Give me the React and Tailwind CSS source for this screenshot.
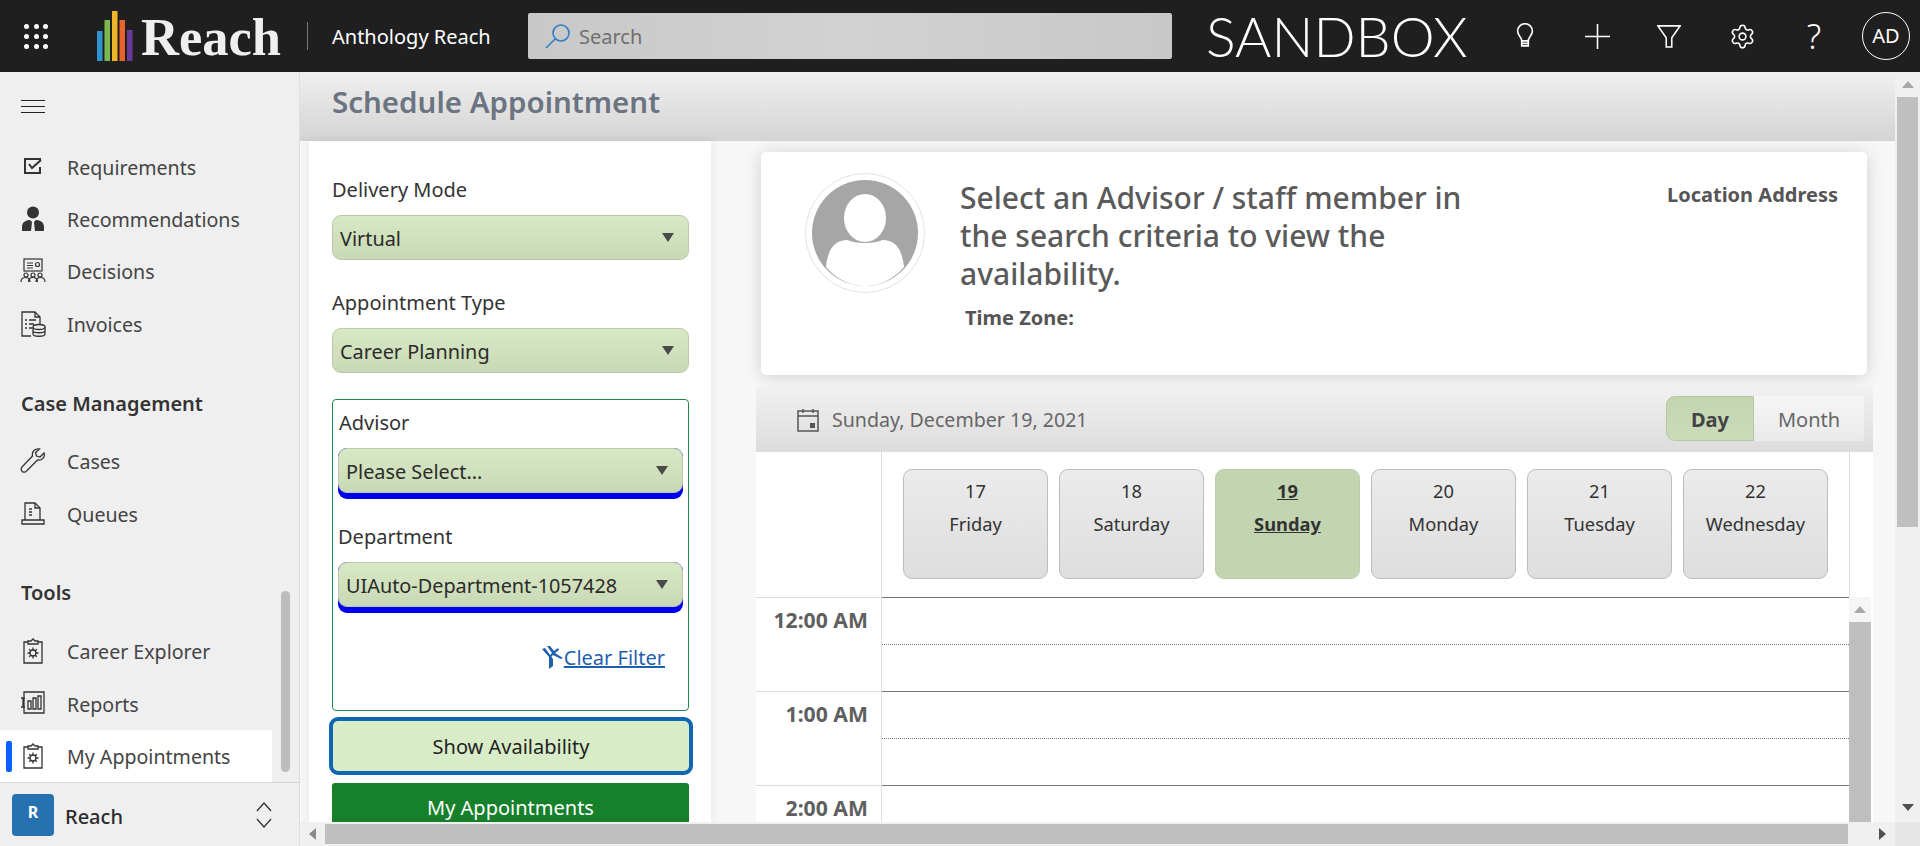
import React from "react";
import { Settings } from "lucide-react";

const FONT = "font-['Noto_Sans',sans-serif]";

// --- little drawings for the sidebar ---
const IconRequirements = () => (
  <svg width="24" height="24" viewBox="0 0 24 24" fill="none" stroke="#333" strokeWidth="2">
    <path d="M20 5H4v14h15v-6" />
    <path d="M8 10l3 4 9-8" />
  </svg>
);
const IconRecommendations = () => (
  <svg width="24" height="26" viewBox="0 0 24 26" fill="#333">
    <circle cx="12" cy="6.5" r="6" />
    <path d="M1 25v-4c0-5 4-7 8-7l2 2-1 9zM23 25v-4c0-5-4-7-8-7l-2 2 1 9z" />
  </svg>
);
const IconDecisions = () => (
  <svg width="26" height="26" viewBox="0 0 26 26" fill="none" stroke="#333" strokeWidth="1.2">
    <rect x="4" y="1" width="18" height="12" />
    <path d="M7 5h6M7 7.500h6M7 10h6" />
    <circle cx="17.500" cy="6.500" r="2" />
    <circle cx="6" cy="17" r="2" />
    <circle cx="13" cy="17" r="2" />
    <circle cx="20" cy="17" r="2" />
    <path d="M1 24c0-6 9-6 9 0M8.500 24c0-6 9-6 9 0M16 24c0-6 9-6 9 0" />
  </svg>
);
const IconInvoices = () => (
  <svg width="26" height="28" viewBox="0 0 26 28" fill="none" stroke="#333" strokeWidth="1.3">
    <path d="M11 26H2V2h13l5 5v7M15 2v5h5" />
    <path d="M5 10h2M9 10h7M5 14h2M9 14h5M5 18h2M9 18h3" />
    <ellipse cx="19" cy="17" rx="6" ry="2.500" />
    <path d="M13 17v7c0 3 12 3 12 0v-7M13 20.500c0 3 12 3 12 0" />
  </svg>
);
const IconCases = () => (
  <svg width="26" height="26" viewBox="0 0 26 26" fill="none" stroke="#333" strokeWidth="1.3">
    <path d="M24 5l-4 4-3.500-1-1-3.500 4-3.500c-4-1-8 2-7 7L2 19c-2 2 0 6 3 5 1 0 1.500-1 2-1.500L17.500 12c4.500 1 8-3 6.500-7z" />
  </svg>
);
const IconQueues = () => (
  <svg width="24" height="24" viewBox="0 0 24 24" fill="none" stroke="#333" strokeWidth="1.3">
    <path d="M4 19V2h10l5 5v12" />
    <path d="M14 2v5h5M8 8h3M8 11h3M8 14h3" />
    <path d="M1 19h22v4H1z" />
  </svg>
);
const IconClipboardGear = () => (
  <svg width="22" height="26" viewBox="0 0 22 26" fill="none" stroke="#333" strokeWidth="1.3">
    <path d="M6 4H2v21h18V4h-4" />
    <path d="M6 6h10V3h-3l-2-2-2 2H6z" />
    <circle cx="11" cy="15" r="3" />
    <path d="M11 9.500v2.500M11 18v2.500M5.500 15H8M14 15h2.500M7.200 11.200l1.800 1.800M13 17l1.800 1.800M14.800 11.200L13 13M9 17l-1.800 1.800" />
  </svg>
);
const IconReports = () => (
  <svg width="24" height="24" viewBox="0 0 24 24" fill="none" stroke="#333" strokeWidth="1.3">
    <path d="M3 1h20v21H3zM0 7h4M0 16h4M2 7v9" />
    <path d="M7 10h3v8H7zM12 7h3v11h-3zM17 5h3v13h-3z" />
  </svg>
);

const topItems = [
  { label: "Requirements", icon: <IconRequirements /> },
  { label: "Recommendations", icon: <IconRecommendations /> },
  { label: "Decisions", icon: <IconDecisions /> },
  { label: "Invoices", icon: <IconInvoices /> },
];
const caseItems = [
  { label: "Cases", icon: <IconCases /> },
  { label: "Queues", icon: <IconQueues /> },
];
const toolItems = [
  { label: "Career Explorer", icon: <IconClipboardGear /> },
  { label: "Reports", icon: <IconReports /> },
  { label: "My Appointments", icon: <IconClipboardGear />, active: true },
];

const days = [
  { num: "17", name: "Friday" },
  { num: "18", name: "Saturday" },
  { num: "19", name: "Sunday", active: true },
  { num: "20", name: "Monday" },
  { num: "21", name: "Tuesday" },
  { num: "22", name: "Wednesday" },
];

const hours = ["12:00 AM", "1:00 AM", "2:00 AM"];

const Triangle = ({ dir = "down", color = "#4a4a4a", w = 12, h = 9 }) => {
  const paths = {
    down: "M0 0h14L7 10z",
    up: "M0 10h14L7 0z",
    left: "M10 0v14L0 7z",
    right: "M0 0v14l10-7z",
  };
  const isSide = dir === "left" || dir === "right";
  return (
    <svg width={w} height={h} viewBox={isSide ? "0 0 10 14" : "0 0 14 10"} preserveAspectRatio="none" fill={color}>
      <path d={paths[dir]} />
    </svg>
  );
};

const NavItem = ({ item }) => (
  <div
    className={`relative flex items-center h-[52.5px] text-[19.6px] text-[#444] ${
      item.active ? "bg-white w-[272px]" : ""
    }`}
  >
    {item.active && (
      <span className="absolute left-[6px] top-[11px] h-[31px] w-[6px] rounded-[2px] bg-[#0a5fff]"></span>
    )}
    <span className="flex w-[67px] shrink-0 justify-center pr-[2px]">{item.icon}</span>
    <span className="pt-[2px]">{item.label}</span>
  </div>
);

const SelectBox = ({ value, focus }) => (
  <div className={focus ? "rounded-[9px] bg-[#0000f0] pb-[6px]" : ""}>
    <div
      className={`flex h-[45px] items-center justify-between rounded-[9px] border border-[#bcc9ae] bg-gradient-to-b from-[#d9e9c4] to-[#c9d8b6] pl-[7px] pr-[14px] text-[19.85px] text-[#2b2b2b]`}
    >
      <span className="pt-[2px]">{value}</span>
      <Triangle />
    </div>
  </div>
);

const FieldLabel = ({ children }) => (
  <div className="mb-[12px] h-[28px] pt-[1px] text-[20px] leading-[28px] text-[#333]">{children}</div>
);

const App = () => {
  return (
    <div className={`flex h-[846px] flex-col overflow-hidden bg-white ${FONT}`}>
      {/* HEADER */}
      <header className="flex h-[72px] shrink-0 items-center bg-[#1f1f1f] text-white">
        <div className="ml-[24px] grid w-[24px] grid-cols-3 gap-[5px]">
          {Array.from({ length: 9 }).map((_, i) => (
            <span key={i} className="h-[5px] w-[5px] rounded-full bg-white"></span>
          ))}
        </div>
        <svg className="ml-[49px]" width="36" height="50" viewBox="0 0 36 50">
          <rect x="0" y="20" width="5.500" height="30" fill="#2f93cf" />
          <rect x="7.500" y="9" width="5.500" height="41" fill="#7cb84a" />
          <rect x="15" y="0" width="5.500" height="50" fill="#f0b429" />
          <rect x="22.500" y="9" width="5.500" height="41" fill="#e8632b" />
          <rect x="30" y="19" width="5.500" height="31" fill="#6a3a98" />
        </svg>
        <span className="ml-[8px] w-[140px] pt-[3px] font-['Liberation_Serif',serif] text-[52.5px] font-bold leading-none text-[#efefef]">
          Reach
        </span>
        <span className="ml-[26px] h-[28px] w-px bg-[#777]"></span>
        <span className="ml-[24px] w-[196px] pt-[2px] text-[20px]">Anthology Reach</span>
        <div className="flex h-[46px] w-[644px] items-center rounded-[2px] bg-gradient-to-r from-[#c8c8c8] via-[#d2d2d2] to-[#c8c8c8] pl-[17px] text-[20px] text-[#6f6f6f]">
          <svg width="26" height="26" viewBox="0 0 26 26" fill="none" stroke="#2f7fc9" strokeWidth="1.600">
            <circle cx="16" cy="10" r="8" />
            <path d="M10 16L1 25" />
          </svg>
          <span className="ml-[8px] pt-[2px]">Search</span>
        </div>
        <span className="ml-[34px] w-[262px] font-['Lato',sans-serif] text-[55.5px] font-light leading-none">
          SANDBOX
        </span>
        <div className="ml-[43px] flex w-[28px] justify-center">
          <svg width="18" height="26" viewBox="0 0 22 30" fill="none" stroke="white" strokeWidth="2">
            <path d="M7 21c0-5-5-6-5-12a9 9 0 0 1 18 0c0 6-5 7-5 12z" />
            <path d="M7 21v6h8v-6M7 24h8" />
          </svg>
        </div>
        <div className="ml-[44px] flex w-[28px] justify-center">
          <svg width="25" height="25" viewBox="0 0 26 26" stroke="white" strokeWidth="1.600">
            <path d="M13 0v26M0 13h26" />
          </svg>
        </div>
        <div className="ml-[44px] flex w-[28px] justify-center">
          <svg width="24" height="24" viewBox="0 0 26 26" fill="none" stroke="white" strokeWidth="1.700">
            <path d="M1 2h24l-9 13v10h-6V15z" />
          </svg>
        </div>
        <div className="ml-[45px] flex w-[28px] justify-center">
          <Settings size={27} strokeWidth={1.4} />
        </div>
        <div className="ml-[44px] flex w-[28px] justify-center text-[34px] font-light leading-none">?</div>
        <div className="ml-[34px] flex h-[48px] w-[48px] items-center justify-center rounded-full border border-white text-[20px]">
          AD
        </div>
      </header>

      <div className="flex min-h-0 flex-1">
        {/* SIDEBAR */}
        <aside className="relative flex w-[300px] shrink-0 flex-col border-r border-[#dedede] bg-[#efefef]">
          <div className="flex h-[68px] shrink-0 items-center pl-[21px]">
            <div className="flex w-[24px] flex-col gap-[5px]">
              <span className="h-px bg-[#222]"></span>
              <span className="h-px bg-[#222]"></span>
              <span className="h-px bg-[#222]"></span>
            </div>
          </div>
          <nav className="flex min-h-0 flex-1 flex-col">
            {topItems.map((item) => (
              <NavItem key={item.label} item={item} />
            ))}
            <div className="mt-[27px] mb-[6px] flex h-[52px] items-center pl-[21px] pt-[2px] text-[20px] font-semibold text-[#333]">
              Case Management
            </div>
            {caseItems.map((item) => (
              <NavItem key={item.label} item={item} />
            ))}
            <div className="mt-[26px] mb-[7px] flex h-[52px] items-center pl-[21px] pt-[2px] text-[20px] font-semibold text-[#333]">
              Tools
            </div>
            {toolItems.map((item) => (
              <NavItem key={item.label} item={item} />
            ))}
          </nav>
          <span className="absolute left-[281px] top-[519px] h-[181px] w-[9px] rounded-full bg-[#bdbdbd]"></span>
          <div className="flex h-[64px] shrink-0 items-center border-t border-[#d6d6d6] pl-[12px]">
            <span className="flex h-[42px] w-[42px] items-center justify-center rounded-[4px] bg-[#2672b0] pb-[6px] text-[16px] font-bold text-white">
              R
            </span>
            <span className="ml-[11px] pt-[4px] text-[20px] font-medium text-[#2b2b2b]">Reach</span>
            <svg className="ml-[132px]" width="18" height="32" viewBox="0 0 18 32" fill="none" stroke="#333" strokeWidth="1.300">
              <path d="M2 12l7-8 7 8M2 20l7 8 7-8" />
            </svg>
          </div>
        </aside>

        {/* MAIN */}
        <div className="flex min-w-0 flex-1 flex-col">
          <div className="flex min-h-0 flex-1">
            <div className="flex min-w-0 flex-1 flex-col overflow-hidden bg-[#f7f7f7]">
              <div className="flex h-[69px] shrink-0 items-center border-b border-[#d2d2d2] bg-gradient-to-b from-[#f0f0f0] to-[#d4d4d4] pl-[32px] pb-[8px] text-[29.500px] font-semibold text-[#6b7480]">
                Schedule Appointment
              </div>
              <div className="flex min-h-0 flex-1">
                {/* FILTER PANEL */}
                <div className="ml-[9px] w-[402px] shrink-0 overflow-hidden bg-white pl-[23px] pr-[22px] pt-[34px] shadow-[0_0_10px_rgba(0,0,0,0.08)]">
                  <FieldLabel>Delivery Mode</FieldLabel>
                  <SelectBox value="Virtual" />
                  <div className="mt-[28px]">
                    <FieldLabel>Appointment Type</FieldLabel>
                    <SelectBox value="Career Planning" />
                  </div>
                  <div className="mt-[26px] h-[312px] rounded-[4px] border border-[#228b45] px-[5px] pt-[8px]">
                    <div className="pl-[1px]">
                      <FieldLabel>Advisor</FieldLabel>
                    </div>
                    <SelectBox value="Please Select..." focus />
                    <div className="mt-[23px]">
                      <FieldLabel>Department</FieldLabel>
                      <SelectBox value="UIAuto-Department-1057428" focus />
                    </div>
                    <div className="mt-[31px] flex items-center justify-end pr-[18px] text-[20px] leading-[28px] text-[#1f5fae]">
                      <svg width="22" height="24" viewBox="0 0 22 24" fill="#1f5fae">
                        <path d="M0 3l7 8v12l4-3v-7L3 2z" />
                        <path d="M5 0l3 0 4 5 4-3 1 2-4 3 8 5-2 1-8-4-3 3-1-2 3-3z" />
                      </svg>
                      <span className="underline">Clear Filter</span>
                    </div>
                  </div>
                  <button className="-ml-[3px] mt-[6px] h-[58px] w-[calc(100%+7px)] rounded-[9px] border-4 border-[#0f67b1] bg-[#d8ecc8] pt-[2px] text-[20px] text-[#222]">
                    Show Availability
                  </button>
                  <button className="mt-[8px] block h-[50px] w-full rounded-[3px] bg-[#16802a] text-[20px] text-white">
                    My Appointments
                  </button>
                </div>

                {/* SCHEDULE */}
                <div className="ml-[45px] flex w-[1117px] shrink-0 flex-col pt-[11px]">
                  <div className="mx-[5px] mr-[6px] flex h-[223px] shrink-0 rounded-[5px] bg-white pl-[44px] pr-[29px] pt-[21px] shadow-[0_2px_18px_rgba(0,0,0,0.16)]">
                    <div className="flex h-[120px] w-[120px] shrink-0 items-center justify-center rounded-full border border-[#e2e2e2]">
                      <svg width="106" height="106" viewBox="0 0 106 106">
                        <circle cx="53" cy="53" r="53" fill="#a6a6a6" />
                        <ellipse cx="53" cy="38" rx="21" ry="24" fill="white" />
                        <path d="M14 87c2-18 8-27 22-27 6 4 28 4 34 0 14 0 20 9 22 27-10 12-24 19-39 19S24 99 14 87z" fill="white" />
                      </svg>
                    </div>
                    <div className="ml-[35px] mt-[6px] w-[540px]">
                      <div className="text-[30px] font-medium leading-[38px] text-[#5a5a5a]">
                        Select an Advisor / staff member in the search criteria to view the availability.
                      </div>
                      <div className="ml-[5px] mt-[11px] text-[20px] font-bold leading-[28px] text-[#555]">Time Zone:</div>
                    </div>
                    <div className="ml-auto mt-[8px] text-[20px] font-bold leading-[28px] text-[#555]">Location Address</div>
                  </div>

                  <div className="mt-[12px] flex h-[65px] shrink-0 items-start justify-between bg-gradient-to-b from-[#f1f1f1] to-[#dcdcdc] pl-[41px] pr-[9px] pt-[9px]">
                    <div className="flex h-[45px] items-center gap-[13px] pt-[2px] text-[19.600px] text-[#666]">
                      <svg width="22" height="24" viewBox="0 0 22 24" fill="none" stroke="#555" strokeWidth="1.500">
                        <path d="M1 3h20v20H1zM1 8h20M6 1v4M16 1v4" />
                        <rect x="13" y="15" width="5" height="5" fill="#555" stroke="none" />
                      </svg>
                      <span>Sunday, December 19, 2021</span>
                    </div>
                    <div className="flex h-[45px] text-[20px]">
                      <div className="flex w-[88px] items-center justify-center rounded-l-[9px] border border-[#b5c6a3] bg-gradient-to-b from-[#c3d5af] to-[#cbdcb9] pt-[3px] font-bold text-[#444]">
                        Day
                      </div>
                      <div className="flex w-[110px] items-center justify-center rounded-r-[3px] bg-gradient-to-b from-[#f6f6f6] to-[#eaeaea] pt-[2px] text-[#666]">
                        Month
                      </div>
                    </div>
                  </div>

                  {/* CALENDAR GRID */}
                  <div className="min-h-0 flex-1 overflow-hidden bg-white">
                    <div className="flex h-[145px]">
                      <div className="w-[126px] shrink-0 border-r border-[#dcdcdc]"></div>
                      <div className="flex w-[968px] shrink-0 gap-[11px] border-r border-[#dcdcdc] pl-[21px] pt-[17px]">
                        {days.map((d) => (
                          <div
                            key={d.num}
                            className={`h-[110px] w-[145px] rounded-[9px] border pt-[4px] text-center text-[18.300px] leading-[33px] ${
                              d.active
                                ? "border-[#bccfa9] bg-[#c3d5b0] font-bold text-[#333] underline"
                                : "border-[#bdbdbd] bg-gradient-to-b from-[#ebebeb] to-[#dedede] text-[#333]"
                            }`}
                          >
                            <div>{d.num}</div>
                            <div>{d.name}</div>
                          </div>
                        ))}
                      </div>
                    </div>
                    <div className="flex">
                      <div className="w-[126px] shrink-0">
                        {hours.map((h) => (
                          <div
                            key={h}
                            className="h-[94px] border-r border-t border-[#dcdcdc] pr-[13px] pt-[8px] text-right text-[21.200px] font-bold leading-[28px] text-[#5f5f5f]"
                          >
                            {h}
                          </div>
                        ))}
                      </div>
                      <div className="w-[967px] shrink-0">
                        {hours.map((h) => (
                          <div key={h} className="h-[94px] border-t border-[#777]">
                            <div className="h-[47px] border-b border-dotted border-[#777]"></div>
                          </div>
                        ))}
                      </div>
                      <div className="flex w-[22px] shrink-0 flex-col bg-[#f5f5f5]">
                        <div className="flex h-[25px] items-center justify-center">
                          <Triangle dir="up" color="#a8a8a8" w={12} h={7} />
                        </div>
                        <div className="h-[200px] bg-[#bfbfbf]"></div>
                      </div>
                    </div>
                  </div>
                </div>
              </div>
            </div>

            {/* PAGE SCROLLBAR */}
            <div className="flex w-[25px] shrink-0 flex-col items-center bg-[#f0f0f0]">
              <div className="flex h-[25px] items-center justify-center">
                <Triangle dir="up" color="#a8a8a8" w={12} h={7} />
              </div>
              <div className="h-[430px] w-[21px] bg-[#bfbfbf]"></div>
              <div className="mt-auto flex h-[30px] items-center justify-center">
                <Triangle dir="down" color="#505050" w={12} h={7} />
              </div>
            </div>
          </div>

          {/* BOTTOM SCROLLBAR */}
          <div className="flex h-[24px] shrink-0 items-center bg-[#f0f0f0]">
            <div className="flex w-[25px] justify-center">
              <Triangle dir="left" color="#8a8a8a" w={7} h={12} />
            </div>
            <div className="h-[20px] w-[1523px] bg-[#bfbfbf]"></div>
            <div className="flex w-[47px] justify-center pl-[22px]">
              <Triangle dir="right" color="#505050" w={7} h={12} />
            </div>
            <div className="h-full flex-1 bg-[#e6e6e6]"></div>
          </div>
        </div>
      </div>
    </div>
  );
};

export default App;
